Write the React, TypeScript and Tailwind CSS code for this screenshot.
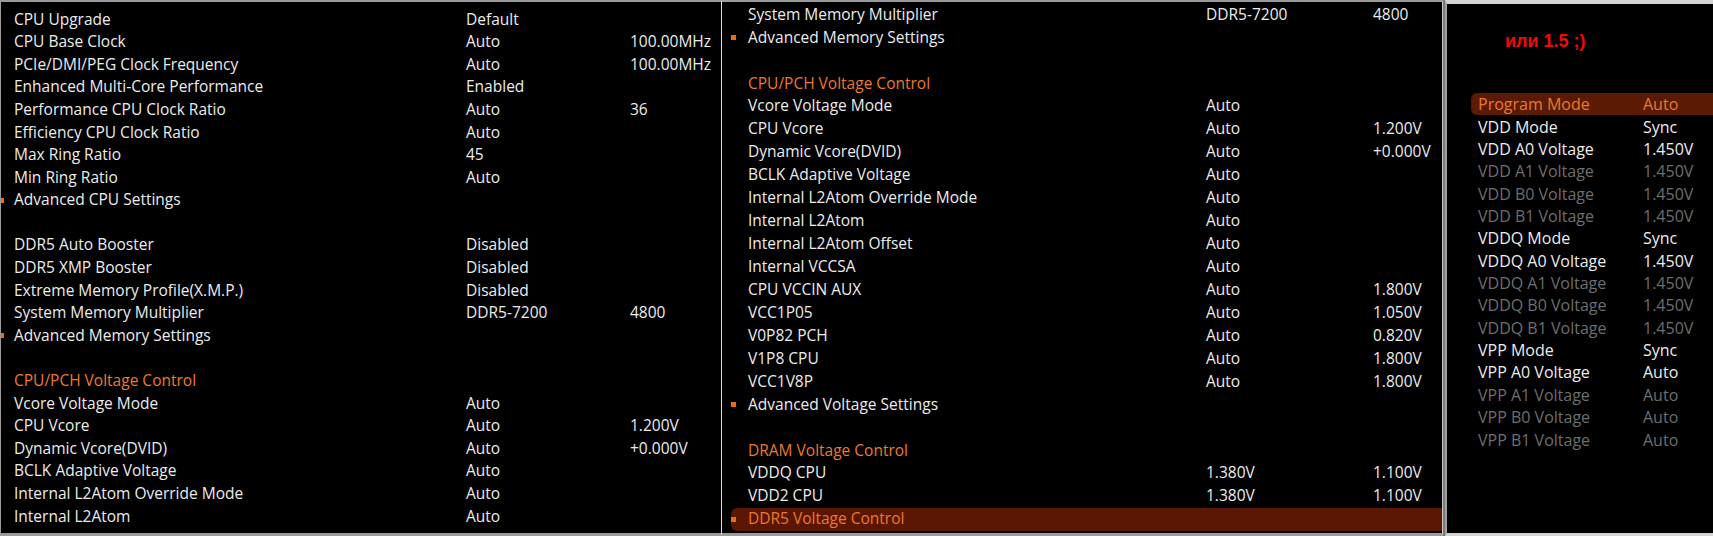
// BIOS tweaker screenshots — three panels side by side: the CPU/memory list,
// the voltage list scrolled further down, and the DDR5 voltage sub-menu.

type Row = {
  label?: string;
  v1?: string;
  v2?: string;
  kind?: "item" | "head" | "sub" | "blank";
  dim?: boolean;
  active?: boolean;
};

const LEFT: Row[] = [
  { label: "CPU Upgrade", v1: "Default" },
  { label: "CPU Base Clock", v1: "Auto", v2: "100.00MHz" },
  { label: "PCIe/DMI/PEG Clock Frequency", v1: "Auto", v2: "100.00MHz" },
  { label: "Enhanced Multi-Core Performance", v1: "Enabled" },
  { label: "Performance CPU Clock Ratio", v1: "Auto", v2: "36" },
  { label: "Efficiency CPU Clock Ratio", v1: "Auto" },
  { label: "Max Ring Ratio", v1: "45" },
  { label: "Min Ring Ratio", v1: "Auto" },
  { label: "Advanced CPU Settings", kind: "sub" },
  { kind: "blank" },
  { label: "DDR5 Auto Booster", v1: "Disabled" },
  { label: "DDR5 XMP Booster", v1: "Disabled" },
  { label: "Extreme Memory Profile(X.M.P.)", v1: "Disabled" },
  { label: "System Memory Multiplier", v1: "DDR5-7200", v2: "4800" },
  { label: "Advanced Memory Settings", kind: "sub" },
  { kind: "blank" },
  { label: "CPU/PCH Voltage Control", kind: "head" },
  { label: "Vcore Voltage Mode", v1: "Auto" },
  { label: "CPU Vcore", v1: "Auto", v2: "1.200V" },
  { label: "Dynamic Vcore(DVID)", v1: "Auto", v2: "+0.000V" },
  { label: "BCLK Adaptive Voltage", v1: "Auto" },
  { label: "Internal L2Atom Override Mode", v1: "Auto" },
  { label: "Internal L2Atom", v1: "Auto" },
];

const MIDDLE: Row[] = [
  { label: "System Memory Multiplier", v1: "DDR5-7200", v2: "4800" },
  { label: "Advanced Memory Settings", kind: "sub" },
  { kind: "blank" },
  { label: "CPU/PCH Voltage Control", kind: "head" },
  { label: "Vcore Voltage Mode", v1: "Auto" },
  { label: "CPU Vcore", v1: "Auto", v2: "1.200V" },
  { label: "Dynamic Vcore(DVID)", v1: "Auto", v2: "+0.000V" },
  { label: "BCLK Adaptive Voltage", v1: "Auto" },
  { label: "Internal L2Atom Override Mode", v1: "Auto" },
  { label: "Internal L2Atom", v1: "Auto" },
  { label: "Internal L2Atom Offset", v1: "Auto" },
  { label: "Internal VCCSA", v1: "Auto" },
  { label: "CPU VCCIN AUX", v1: "Auto", v2: "1.800V" },
  { label: "VCC1P05", v1: "Auto", v2: "1.050V" },
  { label: "V0P82 PCH", v1: "Auto", v2: "0.820V" },
  { label: "V1P8 CPU", v1: "Auto", v2: "1.800V" },
  { label: "VCC1V8P", v1: "Auto", v2: "1.800V" },
  { label: "Advanced Voltage Settings", kind: "sub" },
  { kind: "blank" },
  { label: "DRAM Voltage Control", kind: "head" },
  { label: "VDDQ CPU", v1: "1.380V", v2: "1.100V" },
  { label: "VDD2 CPU", v1: "1.380V", v2: "1.100V" },
  { label: "DDR5 Voltage Control", kind: "sub", active: true },
];

const RIGHT: Row[] = [
  { label: "Program Mode", v1: "Auto", active: true },
  { label: "VDD Mode", v1: "Sync" },
  { label: "VDD A0 Voltage", v1: "1.450V" },
  { label: "VDD A1 Voltage", v1: "1.450V", dim: true },
  { label: "VDD B0 Voltage", v1: "1.450V", dim: true },
  { label: "VDD B1 Voltage", v1: "1.450V", dim: true },
  { label: "VDDQ Mode", v1: "Sync" },
  { label: "VDDQ A0 Voltage", v1: "1.450V" },
  { label: "VDDQ A1 Voltage", v1: "1.450V", dim: true },
  { label: "VDDQ B0 Voltage", v1: "1.450V", dim: true },
  { label: "VDDQ B1 Voltage", v1: "1.450V", dim: true },
  { label: "VPP Mode", v1: "Sync" },
  { label: "VPP A0 Voltage", v1: "Auto" },
  { label: "VPP A1 Voltage", v1: "Auto", dim: true },
  { label: "VPP B0 Voltage", v1: "Auto", dim: true },
  { label: "VPP B1 Voltage", v1: "Auto", dim: true },
];

function textColor(r: Row) {
  if (r.active || r.kind === "head") return "text-[#ec7a2c]";
  if (r.dim) return "text-[#6e6e6e]";
  return "text-[#ececec]";
}

function Bullet() {
  return <span className="block w-[5px] h-[5px] bg-[#ee6c14]" aria-hidden />;
}

export default function App() {
  return (
    <div
      className="flex w-[1713px] h-[536px] bg-black text-[15.5px] leading-none overflow-hidden"
      style={{ fontFamily: '"Open Sans", "Noto Sans", sans-serif' }}
    >
      {/* Left panel */}
      <div className="w-[722px] h-full shrink-0 border-t-2 border-l border-b-[3px] border-r border-[#9a9a9a] border-r-[#e0e0e0] pt-[6px] overflow-hidden">
        {LEFT.map((r, i) => (
          <div key={i} className={`grid grid-cols-[13px_452px_164px_1fr] items-center h-[22.6px] ${textColor(r)}`}>
            <span className="flex -ml-[2px]">{r.kind === "sub" && <Bullet />}</span>
            <span className="whitespace-nowrap">{r.label}</span>
            <span className="whitespace-nowrap">{r.v1}</span>
            <span className="whitespace-nowrap">{r.v2}</span>
          </div>
        ))}
      </div>

      {/* Middle panel */}
      <div className="w-[721px] h-full shrink-0 border-t-2 border-b-[3px] border-r border-[#9a9a9a] border-r-[#c8c8c8] pt-px overflow-hidden">
        {MIDDLE.map((r, i) => (
          <div
            key={i}
            className={`ml-[9px] grid grid-cols-[17px_458px_167px_1fr] items-center h-[22.95px] ${textColor(r)} ${
              r.active ? "bg-[#5a1503] rounded-l-md" : ""
            }`}
          >
            <span className="flex">{r.kind === "sub" && <Bullet />}</span>
            <span className="whitespace-nowrap">{r.label}</span>
            <span className="whitespace-nowrap">{r.v1}</span>
            <span className="whitespace-nowrap">{r.v2}</span>
          </div>
        ))}
      </div>

      {/* Divider */}
      <div className="w-[2px] h-full shrink-0 bg-[#7a7a7a]" />

      {/* Right panel */}
      <div className="flex-1 h-full border-t-4 border-l-2 border-b-[3px] border-[#d4d4d4] border-l-[#a0a0a0] text-[16px] overflow-hidden">
        <div
          className="pl-[58px] pt-[27px] h-[89px] text-[18px] font-bold leading-[20px] text-[#f00a0a]"
          style={{ fontFamily: '"Liberation Sans", Arial, sans-serif' }}
        >
          или 1.5 ;)
        </div>
        {RIGHT.map((r, i) => (
          <div
            key={i}
            className={`ml-[24px] pl-[7px] grid grid-cols-[165px_1fr] items-center h-[22.36px] ${textColor(r)} ${
              r.active ? "bg-[#5a1a04] rounded-l-md" : ""
            }`}
          >
            <span className="whitespace-nowrap">{r.label}</span>
            <span className="whitespace-nowrap">{r.v1}</span>
          </div>
        ))}
      </div>
    </div>
  );
}
